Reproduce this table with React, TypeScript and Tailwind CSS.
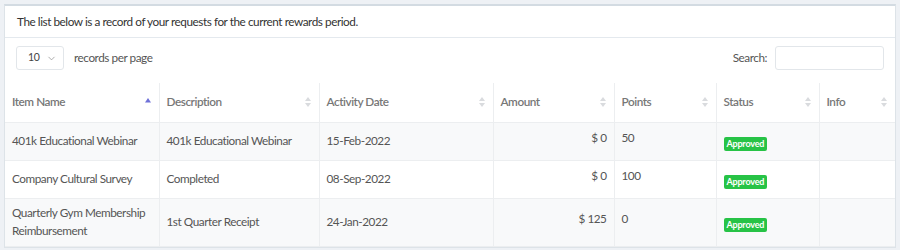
import { ChevronDown } from "lucide-react";

const rows = [
  { name: ["401k Educational Webinar"], desc: "401k Educational Webinar", date: "15-Feb-2022", amount: "$ 0", points: "50" },
  { name: ["Company Cultural Survey"], desc: "Completed", date: "08-Sep-2022", amount: "$ 0", points: "100" },
  { name: ["Quarterly Gym Membership", "Reimbursement"], desc: "1st Quarter Receipt", date: "24-Jan-2022", amount: "$ 125", points: "0" },
];

const columns = [
  { label: "Item Name", w: "w-[154px]", active: true },
  { label: "Description", w: "w-[160px]" },
  { label: "Activity Date", w: "w-[174px]" },
  { label: "Amount", w: "w-[121px]" },
  { label: "Points", w: "w-[102px]" },
  { label: "Status", w: "w-[103px]" },
  { label: "Info", w: "w-[76px]" },
];

function SortIcon({ active }: { active?: boolean }) {
  if (active) {
    return (
      <svg width="8" height="12" viewBox="0 0 8 12" className="shrink-0">
        <path d="M4 2 L7 6.5 L1 6.5 Z" fill="#6f71d8" />
      </svg>
    );
  }
  return (
    <svg width="8" height="12" viewBox="0 0 8 12" className="shrink-0">
      <path d="M4 1 L7 5 L1 5 Z" fill="#d9dbde" />
      <path d="M4 11 L7 7 L1 7 Z" fill="#d9dbde" />
    </svg>
  );
}

export default function App() {
  return (
    <div className="h-[250px] w-[900px] overflow-hidden bg-[#eef1f5] px-[4px] pt-[4px] font-['Lato',sans-serif] text-[11.75px] tracking-[-0.45px] text-[#555]">
      <div className="border border-t-2 border-[#dde3e8] border-t-[#d3dbe2] bg-white">
        <div className="flex h-[32px] items-center border-b border-[#e4e9ee] px-3 text-[#333]">
          The list below is a record of your requests for the current rewards period.
        </div>

        <div className="flex items-center justify-between px-[11px] pt-[8px]">
          <div className="flex items-center gap-[10px]">
            <div className="flex h-[24px] w-[48px] items-center justify-between rounded-[3px] border border-[#e2e6ea] pl-[11px] pr-[6px] text-[10.5px] text-[#444]">
              <span>10</span>
              <ChevronDown size={11} strokeWidth={1.5} className="text-[#888]" />
            </div>
            <span>records per page</span>
          </div>
          <div className="flex items-center gap-[8px]">
            <span>Search:</span>
            <div className="h-[24px] w-[109px] rounded-[3px] border border-[#e2e6ea]" />
          </div>
        </div>

        <table className="mt-[13px] w-full table-fixed border-collapse">
          <thead>
            <tr className="h-[39px] border-b border-[#eceef0]">
              {columns.map((c, i) => (
                <th
                  key={c.label}
                  className={`${c.w} px-[7px] text-left align-middle font-semibold text-[#777] ${i > 0 ? "border-l border-[#eceef0]" : ""}`}
                >
                  <div className="flex items-center justify-between">
                    <span>{c.label}</span>
                    <SortIcon active={c.active} />
                  </div>
                </th>
              ))}
            </tr>
          </thead>
          <tbody>
            {rows.map((r, idx) => (
              <tr key={idx} className={`h-[38px] border-b border-[#eceef0] ${idx % 2 === 0 ? "bg-[#f8f9fa]" : "bg-white"}`}>
                <td className="px-[7px] py-[5.5px] align-middle leading-[18px]">
                  {r.name.map((n) => (
                    <div key={n}>{n}</div>
                  ))}
                </td>
                <td className="border-l border-[#eceef0] px-[7px] align-middle">{r.desc}</td>
                <td className="border-l border-[#eceef0] px-[7px] align-middle">{r.date}</td>
                <td className="border-l border-[#eceef0] px-[7px] pb-[6px] text-right align-middle">{r.amount}</td>
                <td className="border-l border-[#eceef0] px-[7px] pb-[6px] align-middle">{r.points}</td>
                <td className="border-l border-[#eceef0] px-[7px] pt-[3px] align-middle">
                  <span className="inline-block rounded-[2px] bg-[#27c346] px-[3px] text-[9px] font-bold leading-[14px] tracking-[-0.2px] text-white">
                    Approved
                  </span>
                </td>
                <td className="border-l border-[#eceef0] px-[7px]" />
              </tr>
            ))}
          </tbody>
        </table>
      </div>
    </div>
  );
}
